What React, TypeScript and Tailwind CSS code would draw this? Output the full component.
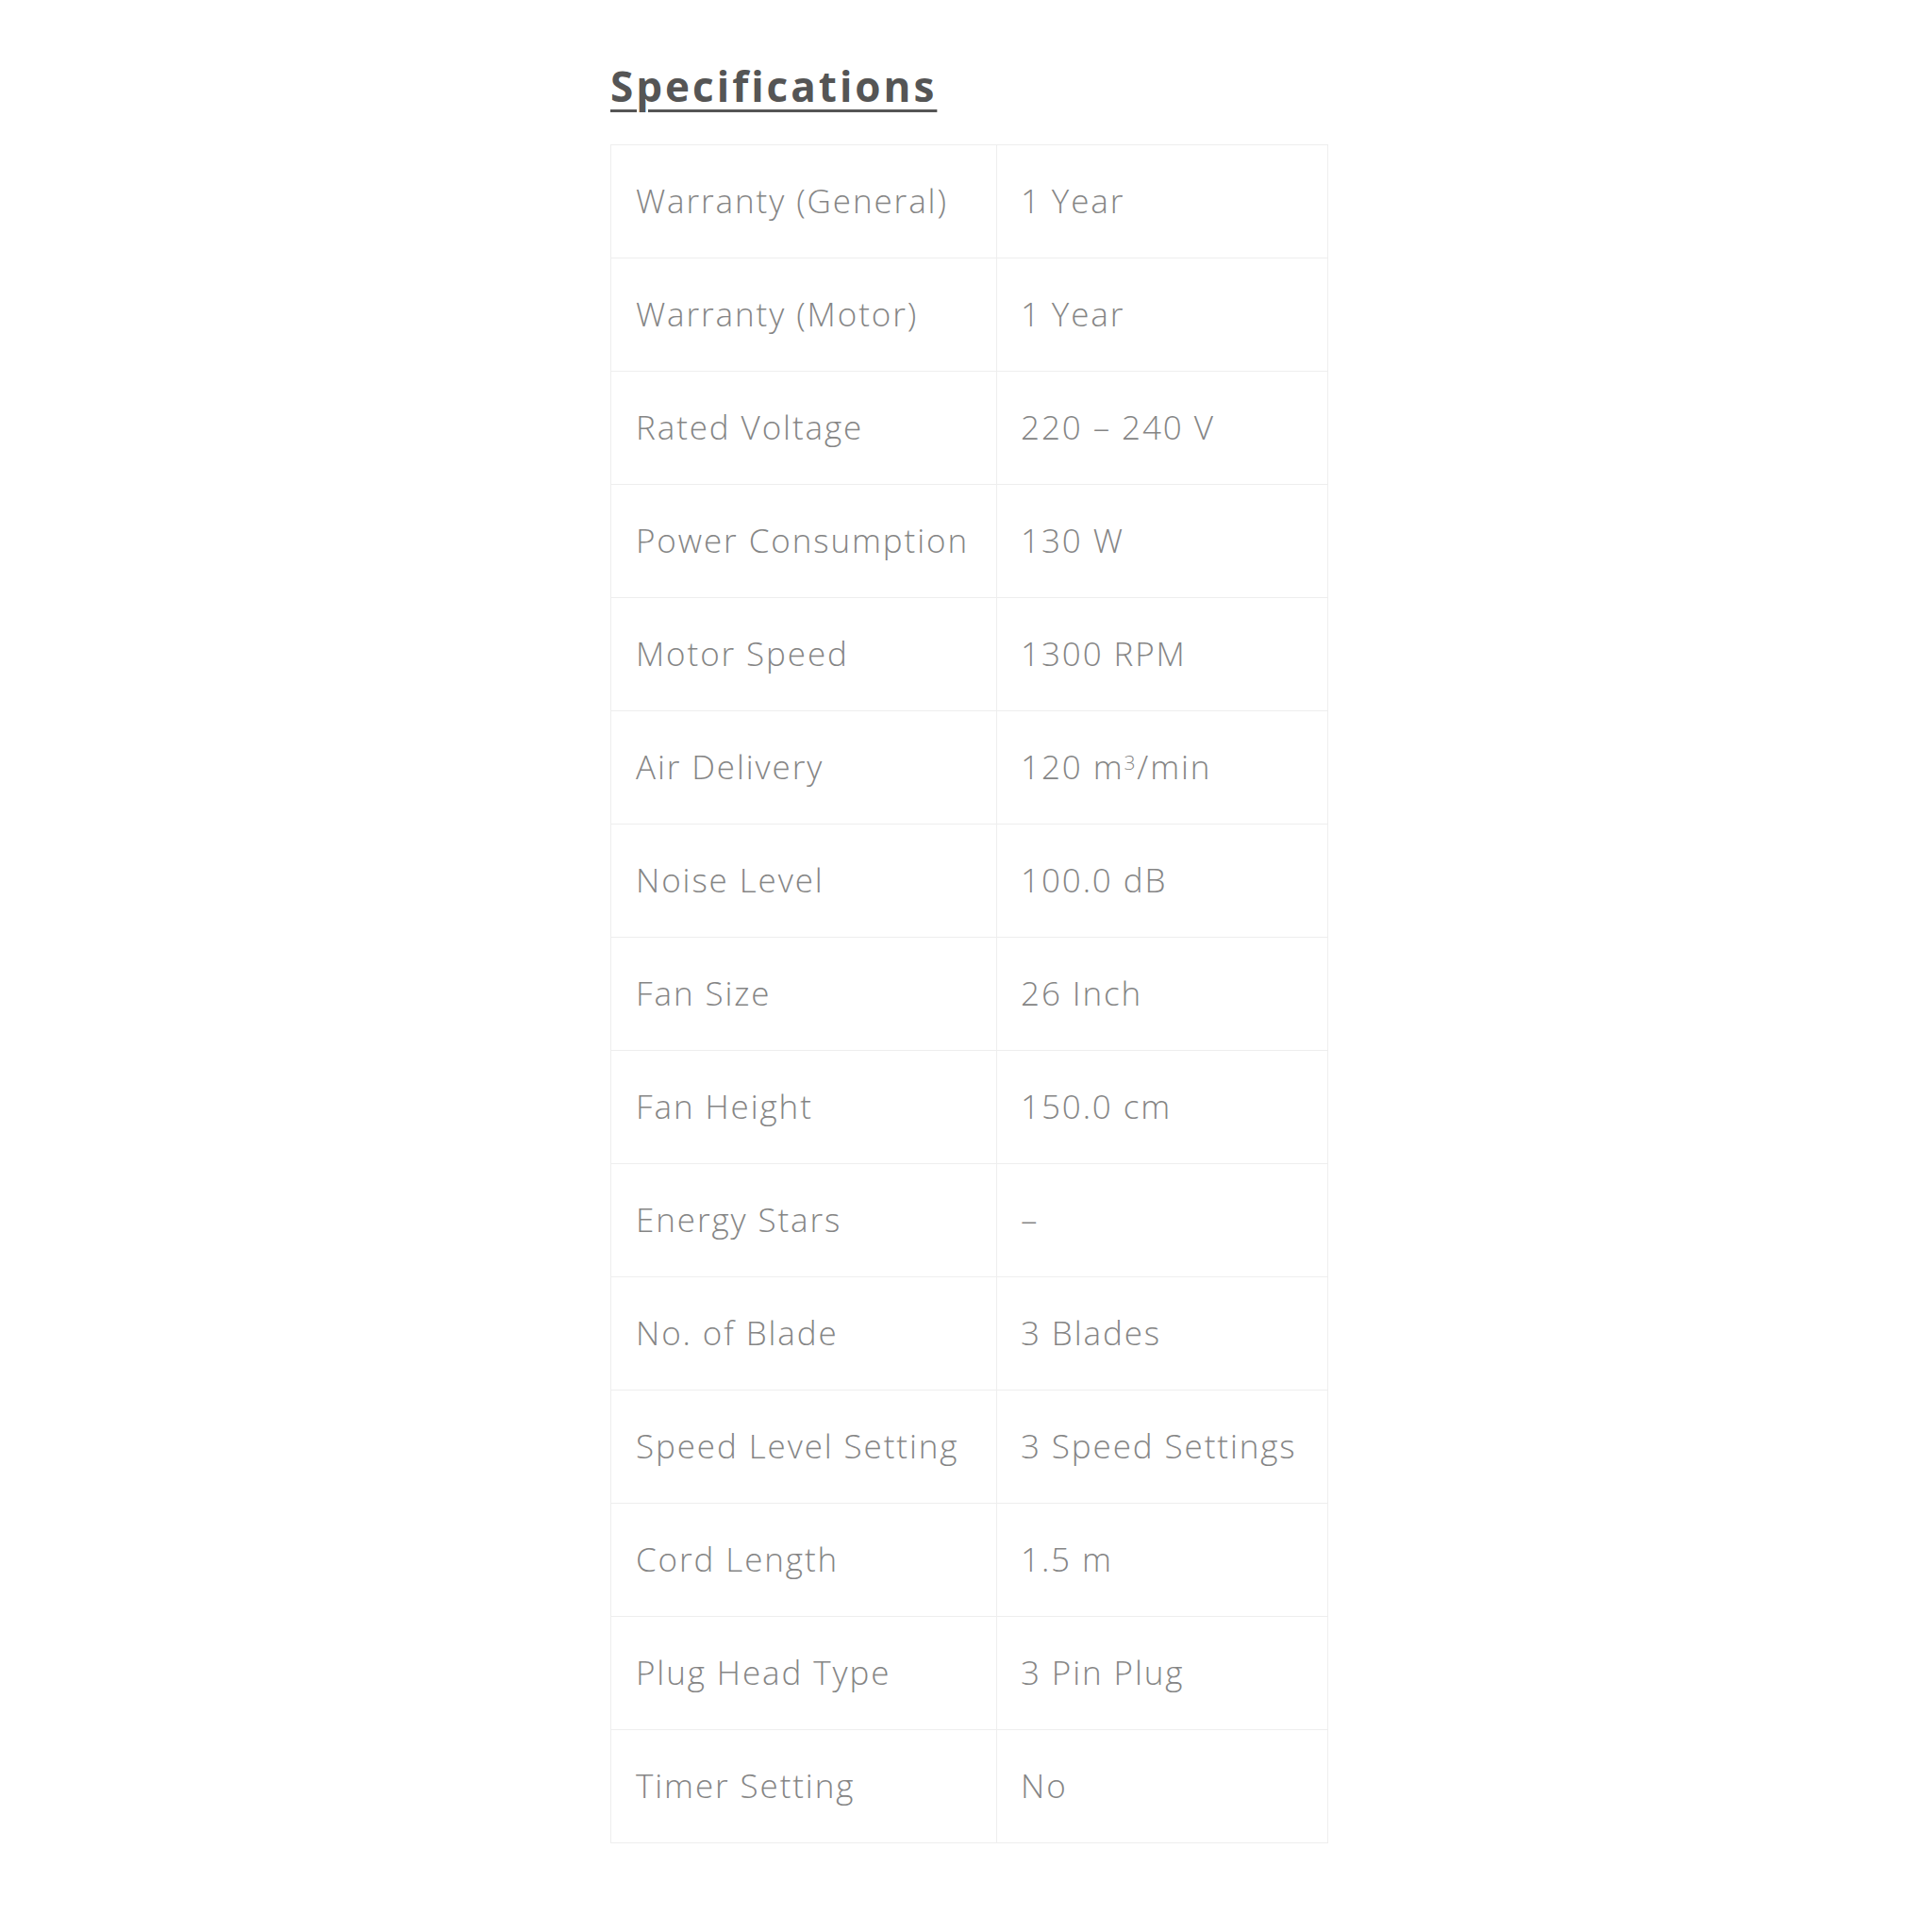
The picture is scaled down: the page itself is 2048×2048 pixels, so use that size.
import type { ReactNode } from 'react';

const SPECS: { label: string; value: ReactNode }[] = [
  { label: 'Warranty (General)', value: '1 Year' },
  { label: 'Warranty (Motor)', value: '1 Year' },
  { label: 'Rated Voltage', value: '220 – 240 V' },
  { label: 'Power Consumption', value: '130 W' },
  { label: 'Motor Speed', value: '1300 RPM' },
  {
    label: 'Air Delivery',
    value: (
      <>
        120 m<sup className="text-[0.6em]">3</sup>/min
      </>
    ),
  },
  { label: 'Noise Level', value: '100.0 dB' },
  { label: 'Fan Size', value: '26 Inch' },
  { label: 'Fan Height', value: '150.0 cm' },
  { label: 'Energy Stars', value: '–' },
  { label: 'No. of Blade', value: '3 Blades' },
  { label: 'Speed Level Setting', value: '3 Speed Settings' },
  { label: 'Cord Length', value: '1.5 m' },
  { label: 'Plug Head Type', value: '3 Pin Plug' },
  { label: 'Timer Setting', value: 'No' },
];

export default function App() {
  return (
    <div className="min-h-[2048px] bg-white font-['Open_Sans','Lato',sans-serif]">
      <div className="ml-[647px] w-[761px] pt-[63px]">
        <h2 className="text-[44px] font-bold leading-[56px] tracking-[3px] text-[#555] underline decoration-[3px] underline-offset-[8px]">
          Specifications
        </h2>
        <table className="mt-[34px] w-[761px] border-collapse border border-[#eeeeee] text-[35px] font-light tracking-[1.9px] text-[#858585]">
          <tbody>
            {SPECS.map((row) => (
              <tr key={row.label} className="h-[120px]">
                <td className="w-[409px] border border-[#eeeeee] pl-[26px] pr-2 align-middle whitespace-nowrap">{row.label}</td>
                <td className="border border-[#eeeeee] pl-[25px] pr-2 align-middle whitespace-nowrap">{row.value}</td>
              </tr>
            ))}
          </tbody>
        </table>
      </div>
    </div>
  );
}
